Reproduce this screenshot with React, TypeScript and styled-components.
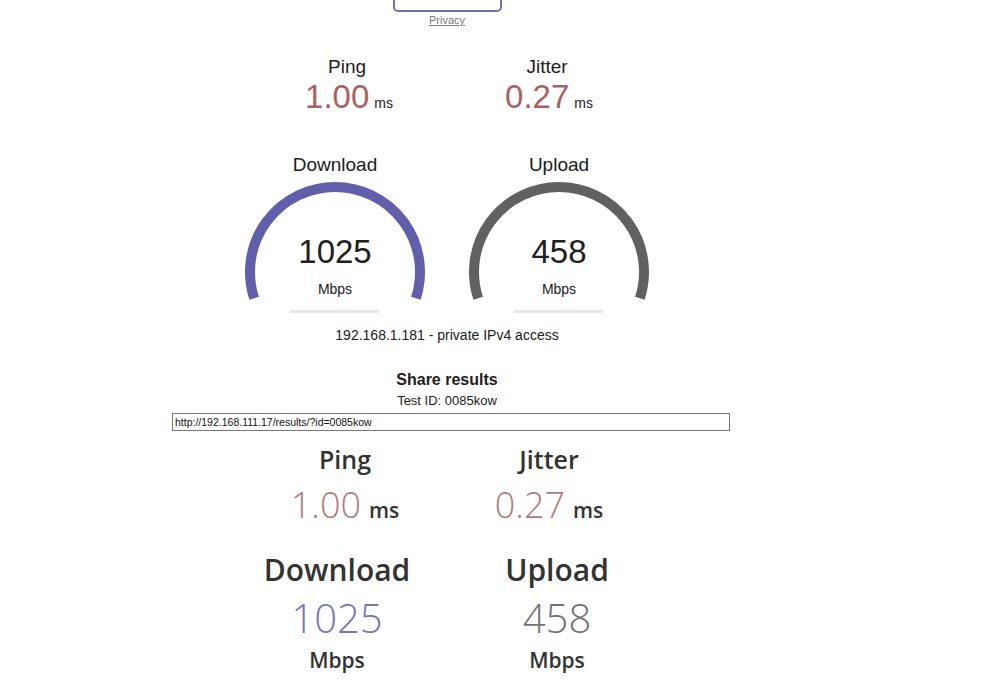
import React from "react";
import styled, { createGlobalStyle } from "styled-components";

const GlobalStyle = createGlobalStyle`
  html, body {
    margin: 0;
    padding: 0;
    background: #ffffff;
    overflow: hidden;
  }
  body {
    font-family: "Liberation Sans", Arial, sans-serif;
    color: #202020;
  }
`;

const Page = styled.div`
  width: 894px;
  height: 698px;
  display: flex;
  flex-direction: column;
  align-items: center;
  text-align: center;
`;

const StartButton = styled.div`
  width: 109px;
  height: 30px;
  margin-top: -18px;
  box-sizing: border-box;
  border: 2px solid #6f6fb2;
  border-radius: 5px;
`;

const PrivacyLink = styled.a`
  margin-top: 2px;
  font-size: 11px;
  line-height: 13px;
  color: #7a7a7a;
  text-decoration: underline;
`;

const TestGroup = styled.div<{ $top: number }>`
  display: flex;
  justify-content: center;
  margin-top: ${(p) => p.$top}px;
`;

const SmallArea = styled.div`
  width: 200px;
  display: flex;
  flex-direction: column;
  align-items: center;
`;

const TestName = styled.div`
  font-size: 19px;
  line-height: 22px;
  color: #202020;
`;

const MeterRow = styled.div`
  display: flex;
  align-items: baseline;
  justify-content: center;
  gap: 5px;
  padding-left: 4px;
`;

const MeterValue = styled.span`
  font-size: 33px;
  line-height: 38px;
  color: #aa6060;
`;

const Unit = styled.span`
  font-size: 14px;
  color: #202020;
`;

const GaugeArea = styled.div`
  position: relative;
  width: 224px;
  display: flex;
  flex-direction: column;
  align-items: center;
`;

const GaugeValue = styled.div`
  position: absolute;
  top: 79px;
  left: 0;
  right: 0;
  font-size: 33px;
  line-height: 38px;
  color: #202020;
`;

const GaugeUnit = styled.div`
  position: absolute;
  top: 127px;
  left: 0;
  right: 0;
  font-size: 14px;
  line-height: 16px;
  color: #202020;
`;

const IpInfo = styled.div`
  margin-top: 11px;
  font-size: 14px;
  line-height: 16px;
`;

const ShareTitle = styled.div`
  margin-top: 28px;
  font-size: 16px;
  line-height: 18px;
  font-weight: bold;
`;

const TestId = styled.div`
  margin-top: 4px;
  font-size: 13px;
  line-height: 15px;
`;

const ResultUrl = styled.input`
  margin-top: 5px;
  margin-left: 8px;
  width: 558px;
  height: 18px;
  box-sizing: border-box;
  padding: 0 2px;
  border: 1px solid #777777;
  font-family: "Liberation Sans", Arial, sans-serif;
  font-size: 10.5px;
  color: #111111;
  outline: none;
`;

/* the result card below is the shareable summary, set in Open Sans */
const ResultRow = styled.div<{ $top: number }>`
  display: flex;
  justify-content: center;
  margin-top: ${(p) => p.$top}px;
`;

const ResultCell = styled.div<{ $width: number }>`
  width: ${(p) => p.$width}px;
  display: flex;
  flex-direction: column;
  align-items: center;
  font-family: "Open Sans", sans-serif;
  color: #333333;
`;

const ResultLabel = styled.div<{ $size: number }>`
  font-size: ${(p) => p.$size}px;
  line-height: ${(p) => p.$size + 5}px;
  font-weight: 600;
`;

const ResultValue = styled.div<{ $size: number; $color: string; $gap: number }>`
  margin-top: ${(p) => p.$gap}px;
  font-size: ${(p) => p.$size}px;
  line-height: ${(p) => p.$size + 4}px;
  font-weight: 300;
  color: ${(p) => p.$color};
  display: flex;
  align-items: baseline;
  gap: 8px;
`;

const ResultUnit = styled.span<{ $size: number }>`
  font-size: ${(p) => p.$size}px;
  font-weight: 600;
  color: #333333;
`;

const ResultMbps = styled.div`
  margin-top: 8px;
  font-size: 21px;
  line-height: 24px;
  font-weight: 600;
`;

// meter arc from -1.1π to 0.1π, plus the progress bar underneath
const Gauge = ({ color }: { color: string }) => {
  const cx = 112;
  const cy = 96;
  const r = 85;
  const a0 = -Math.PI * 1.1;
  const a1 = Math.PI * 0.1;
  const x0 = cx + r * Math.cos(a0);
  const y0 = cy + r * Math.sin(a0);
  const x1 = cx + r * Math.cos(a1);
  const y1 = cy + r * Math.sin(a1);
  const d = `M ${x0} ${y0} A ${r} ${r} 0 1 1 ${x1} ${y1}`;
  return (
    <svg width="224" height="140" viewBox="0 0 224 140">
      <path d={d} fill="none" stroke={color} strokeWidth="10" />
      <rect x="67" y="134" width="89" height="3" fill="#e6e6e6" />
    </svg>
  );
};

const App = () => {
  return (
    <Page>
      <GlobalStyle />
      <StartButton />
      <PrivacyLink>Privacy</PrivacyLink>

      <TestGroup $top={29}>
        <SmallArea>
          <TestName>Ping</TestName>
          <MeterRow>
            <MeterValue>1.00</MeterValue>
            <Unit>ms</Unit>
          </MeterRow>
        </SmallArea>
        <SmallArea>
          <TestName>Jitter</TestName>
          <MeterRow>
            <MeterValue>0.27</MeterValue>
            <Unit>ms</Unit>
          </MeterRow>
        </SmallArea>
      </TestGroup>

      <TestGroup $top={38}>
        <GaugeArea>
          <TestName>Download</TestName>
          <Gauge color="#5f5fab" />
          <GaugeValue>1025</GaugeValue>
          <GaugeUnit>Mbps</GaugeUnit>
        </GaugeArea>
        <GaugeArea>
          <TestName>Upload</TestName>
          <Gauge color="#616161" />
          <GaugeValue>458</GaugeValue>
          <GaugeUnit>Mbps</GaugeUnit>
        </GaugeArea>
      </TestGroup>

      <IpInfo>192.168.1.181 - private IPv4 access</IpInfo>

      <ShareTitle>Share results</ShareTitle>
      <TestId>Test ID: 0085kow</TestId>
      <ResultUrl readOnly value="http://192.168.111.17/results/?id=0085kow" />

      <ResultRow $top={13}>
        <ResultCell $width={204}>
          <ResultLabel $size={25}>Ping</ResultLabel>
          <ResultValue $size={36} $color="#b27a7a" $gap={11}>
            1.00<ResultUnit $size={21}>ms</ResultUnit>
          </ResultValue>
        </ResultCell>
        <ResultCell $width={204}>
          <ResultLabel $size={25}>Jitter</ResultLabel>
          <ResultValue $size={36} $color="#b27a7a" $gap={11}>
            0.27<ResultUnit $size={21}>ms</ResultUnit>
          </ResultValue>
        </ResultCell>
      </ResultRow>

      <ResultRow $top={22}>
        <ResultCell $width={220}>
          <ResultLabel $size={30}>Download</ResultLabel>
          <ResultValue $size={40} $color="#7777b6" $gap={9}>
            1025
          </ResultValue>
          <ResultMbps>Mbps</ResultMbps>
        </ResultCell>
        <ResultCell $width={220}>
          <ResultLabel $size={30}>Upload</ResultLabel>
          <ResultValue $size={40} $color="#737373" $gap={9}>
            458
          </ResultValue>
          <ResultMbps>Mbps</ResultMbps>
        </ResultCell>
      </ResultRow>
    </Page>
  );
};

export default App;
